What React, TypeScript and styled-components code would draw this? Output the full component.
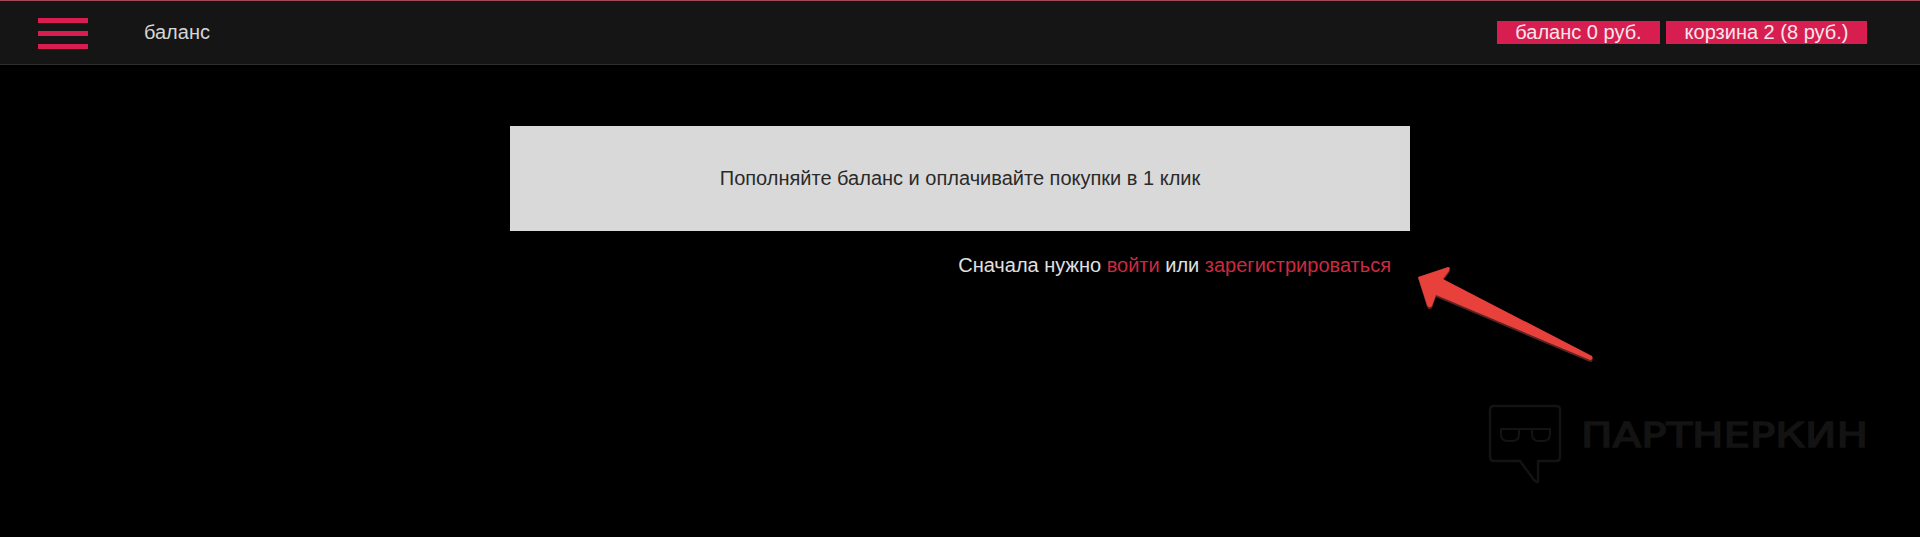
import React from 'react';
import styled, { createGlobalStyle } from 'styled-components';

const Global = createGlobalStyle`
    html, body {
        margin: 0;
        padding: 0;
        background: #000;
        overflow: hidden;
    }
    body {
        font-family: "Liberation Sans", Arial, sans-serif;
    }
`;

export default function App() {
    return (
        <Page>
            <Global />
            <Header>
                <Burger>
                    <BurgerBar />
                    <BurgerBar />
                    <BurgerBar />
                </Burger>
                <HeaderTitle>баланс</HeaderTitle>
                <HeaderButtons>
                    <HeaderButton $width={163}>баланс 0 руб.</HeaderButton>
                    <HeaderButton $width={201}>корзина 2 (8 руб.)</HeaderButton>
                </HeaderButtons>
            </Header>
            <Content>
                <Banner>Пополняйте баланс и оплачивайте покупки в 1 клик</Banner>
                <Hint>
                    Сначала нужно <HintLink>войти</HintLink> или <HintLink>зарегистрироваться</HintLink>
                </Hint>
            </Content>
            <Arrow viewBox="0 0 200 110" aria-hidden="true">
                <ArrowShadow d="M3 13 L33 4 Q36 4 34 8 L28 16 L177 93 Q179 97 175 97 L21 32 L17 43 Q14 46 12 42 Z" />
                <ArrowFill d="M3 12 L33 2 Q36 2 34 6 L28 14 L177 91 Q179 95 175 95 L21 30 L17 41 Q14 44 12 40 Z" />
            </Arrow>
            <Watermark>
                <svg width="76" height="84" viewBox="0 0 76 84" fill="none" aria-hidden="true">
                    <path
                        d="M6 3 H68 Q72 3 72 7 V54 Q72 58 68 58 H50 V77 Q50 81 46 77 L32 58 H6 Q2 58 2 54 V7 Q2 3 6 3 Z"
                        stroke="#131313"
                        strokeWidth="2.5"
                        strokeLinejoin="round"
                    />
                    <path
                        d="M13 26 V31 Q13 38 20 38 H24 Q31 38 31 31 V26 H13 M44 26 V31 Q44 38 51 38 H55 Q62 38 62 31 V26 H44 M31 26 H44"
                        stroke="#131313"
                        strokeWidth="2"
                        strokeLinecap="round"
                        strokeLinejoin="round"
                    />
                </svg>
                <WatermarkText>ПАРТНЕРКИН</WatermarkText>
            </Watermark>
        </Page>
    );
}

const Page = styled.div`
    position: relative;
    width: 100%;
    height: 537px;
    background: #000;
    overflow: hidden;
`;

const Header = styled.div`
    box-sizing: border-box;
    height: 65px;
    display: flex;
    align-items: center;
    padding: 0 53px 0 38px;
    background: #151515;
    border-top: 1px solid #a04a58;
    border-bottom: 1px solid #2e2e2e;
`;

const Burger = styled.div`
    width: 50px;
    display: flex;
    flex-direction: column;
    gap: 8px;
    margin-top: 1px;
`;

const BurgerBar = styled.div`
    height: 5px;
    background: #d81e50;
`;

const HeaderTitle = styled.span`
    margin-left: 56px;
    font-size: 20px;
    color: #d6d6d6;
`;

const HeaderButtons = styled.div`
    margin-left: auto;
    display: flex;
    gap: 6px;
`;

const HeaderButton = styled.div<{ $width: number }>`
    width: ${(p) => p.$width}px;
    height: 23px;
    line-height: 23px;
    text-align: center;
    font-size: 20px;
    color: #f6e6ea;
    background: #d81e50;
`;

const Content = styled.div`
    width: 900px;
    margin: 61px 0 0 510px;
`;

const Banner = styled.div`
    height: 105px;
    display: flex;
    align-items: center;
    justify-content: center;
    font-size: 20px;
    color: #2a2a2a;
    background: #d9d9d9;
`;

const Hint = styled.div`
    margin-top: 24px;
    padding-right: 19px;
    text-align: right;
    font-size: 20px;
    line-height: 21px;
    color: #e0e0e0;
`;

const HintLink = styled.a`
    color: #cc2a42;
`;

const Arrow = styled.svg`
    position: absolute;
    left: 1415px;
    top: 265px;
    width: 200px;
    height: 110px;
`;

const ArrowShadow = styled.path`
    fill: #5a2422;
`;

const ArrowFill = styled.path`
    fill: #e8403a;
`;

const Watermark = styled.div`
    position: absolute;
    left: 1488px;
    top: 403px;
    display: flex;
    align-items: flex-start;
    gap: 17px;
`;

const WatermarkText = styled.span`
    display: inline-block;
    margin-top: 13px;
    font-family: "DejaVu Sans", sans-serif;
    font-size: 33px;
    line-height: 40px;
    font-weight: 400;
    color: #131313;
    -webkit-text-stroke: 1.4px #131313;
    white-space: nowrap;
    transform: scaleX(1.27);
    transform-origin: left center;
`;
